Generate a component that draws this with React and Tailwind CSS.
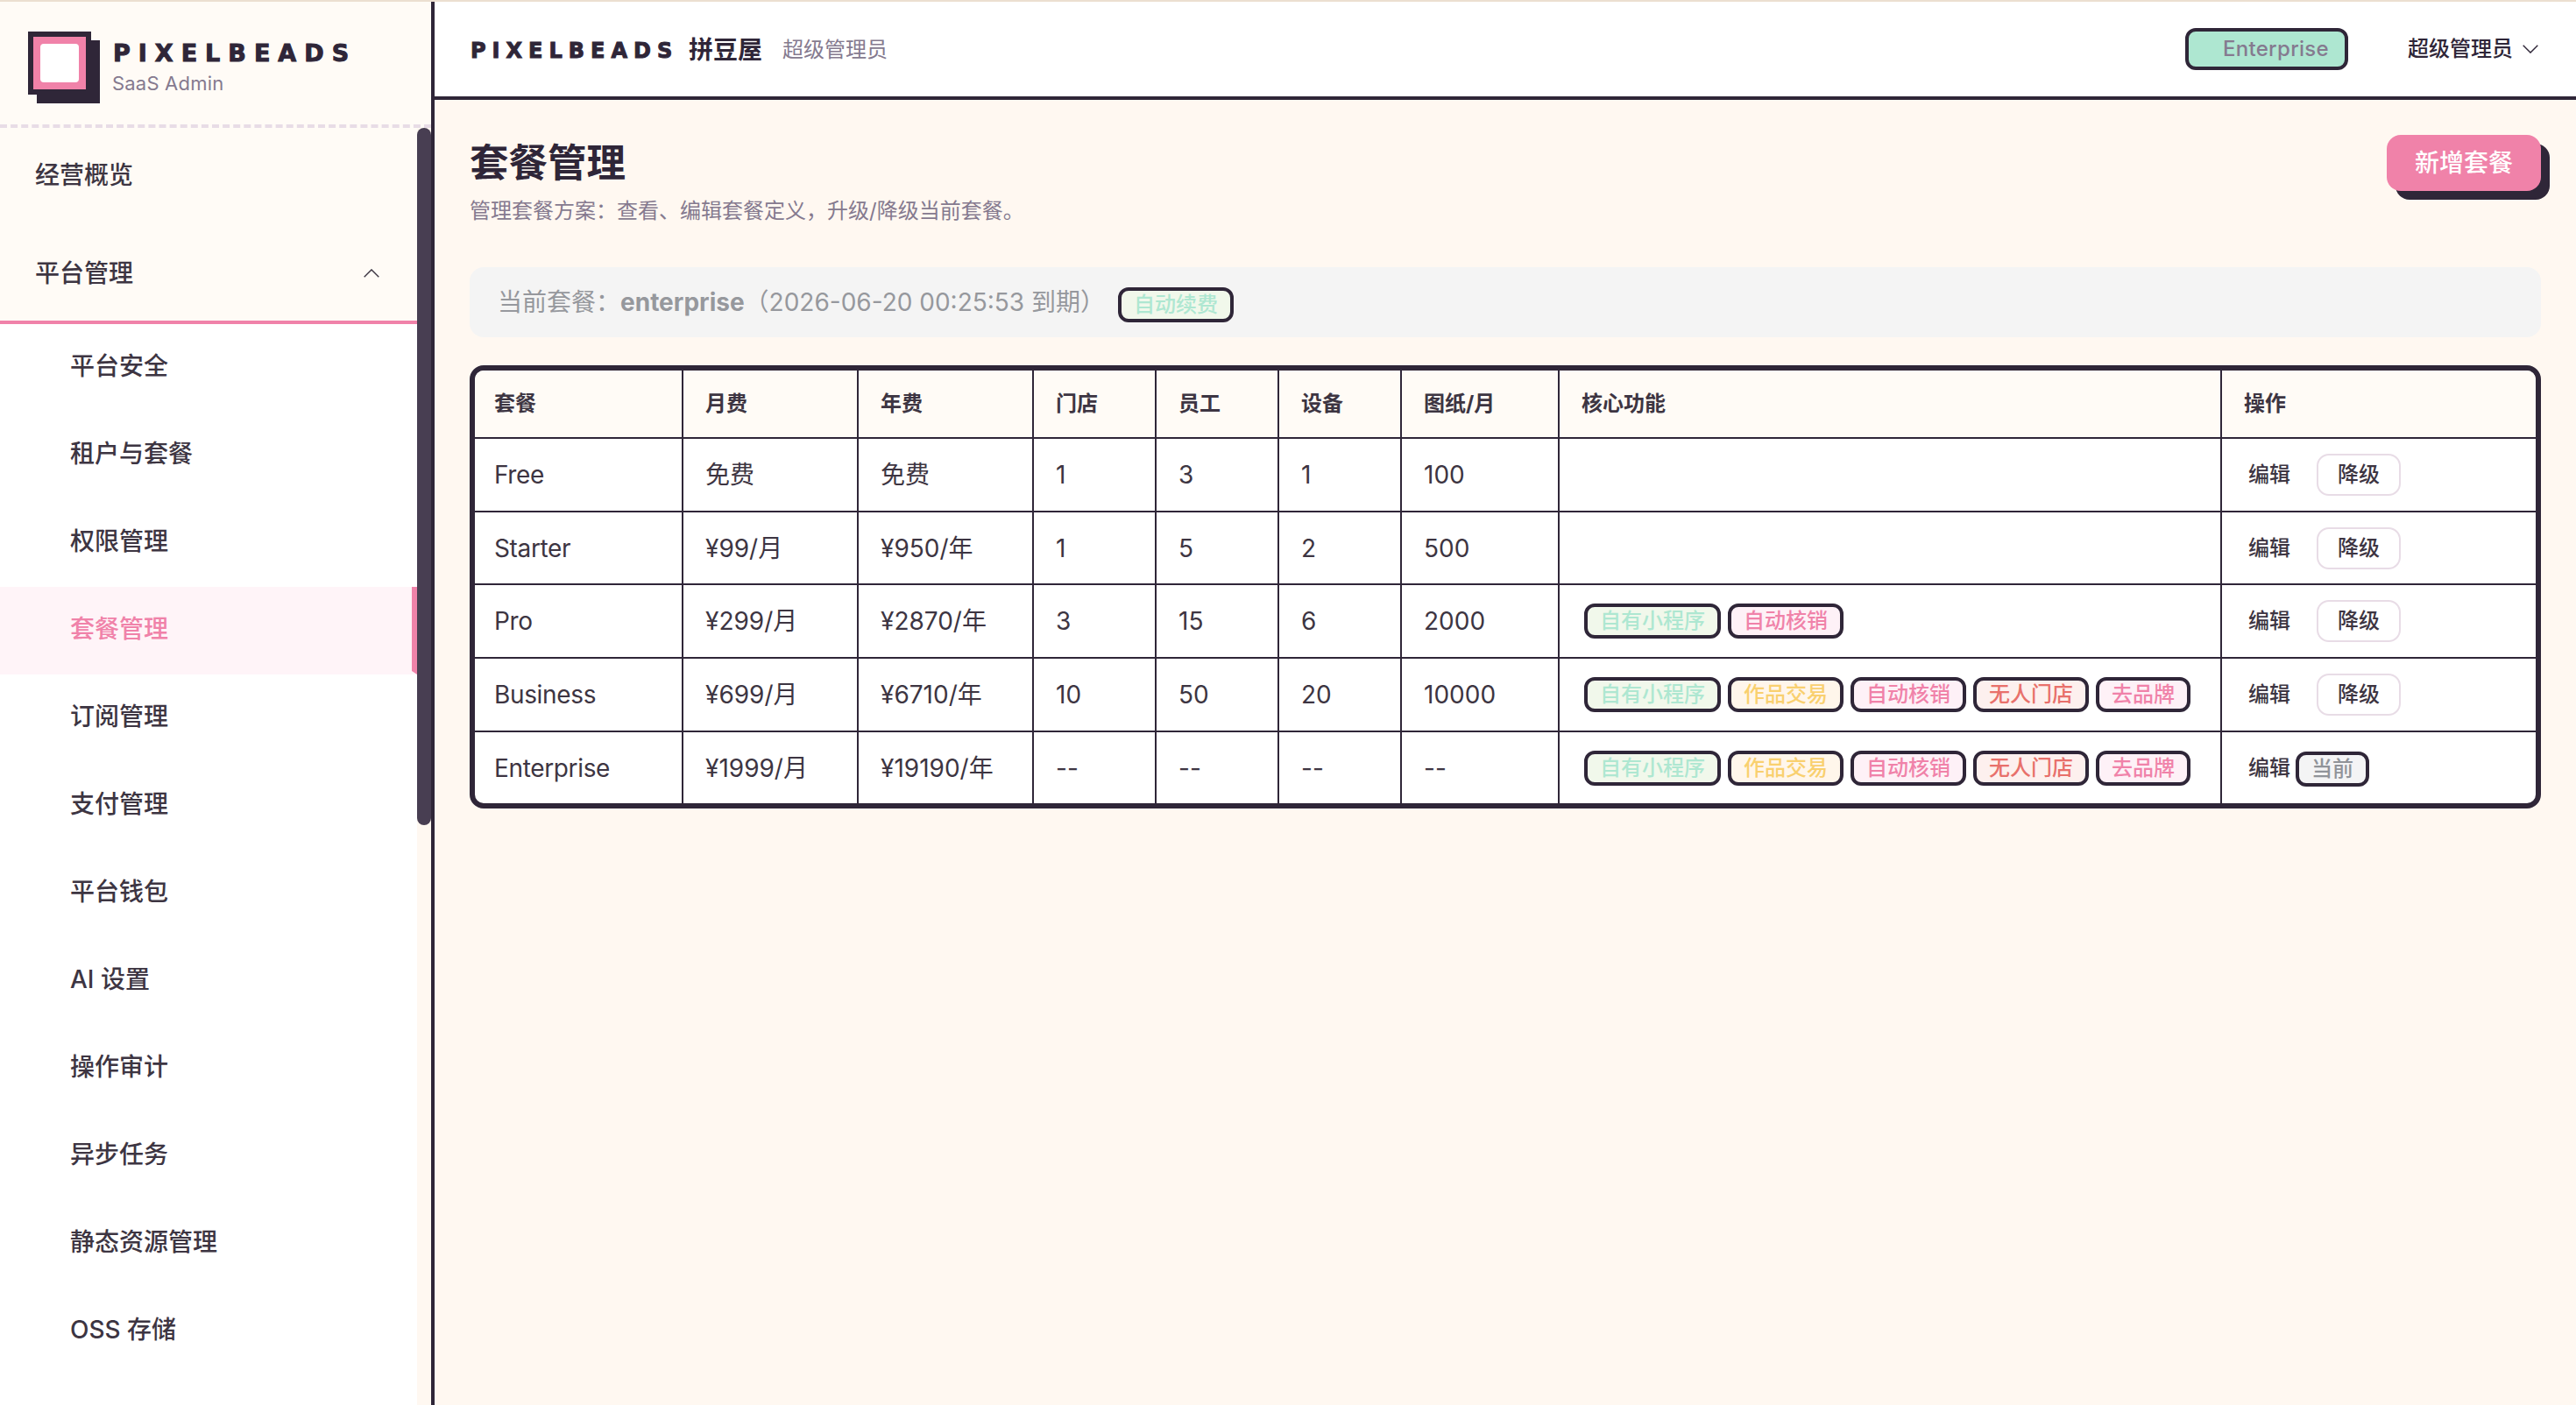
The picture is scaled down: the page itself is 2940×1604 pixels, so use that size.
import React, { useState } from 'react'

const menu = ['平台安全', '租户与套餐', '权限管理', '套餐管理', '订阅管理', '支付管理', '平台钱包', 'AI 设置', '操作审计', '异步任务', '静态资源管理', 'OSS 存储']

const headers = ['套餐', '月费', '年费', '门店', '员工', '设备', '图纸/月', '核心功能', '操作']

const allTags = ['自有小程序', '作品交易', '自动核销', '无人门店', '去品牌']

const plans = [
	{ name: 'Free', cells: ['免费', '免费', '1', '3', '1', '100'], tags: [] },
	{ name: 'Starter', cells: ['¥99/月', '¥950/年', '1', '5', '2', '500'], tags: [] },
	{ name: 'Pro', cells: ['¥299/月', '¥2870/年', '3', '15', '6', '2000'], tags: ['自有小程序', '自动核销'] },
	{ name: 'Business', cells: ['¥699/月', '¥6710/年', '10', '50', '20', '10000'], tags: allTags },
	{ name: 'Enterprise', cells: ['¥1999/月', '¥19190/年', '--', '--', '--', '--'], tags: allTags, current: true }
]

const tagColors = {
	'自有小程序': 'bg-[#f1f8eb] text-[#aee7d1]',
	'自动续费': 'bg-[#f1f8eb] text-[#aee7d1]',
	'作品交易': 'bg-[#fff6eb] text-[#f9d06f]',
	'自动核销': 'bg-[#fef1f7] text-[#f082a9]',
	'无人门店': 'bg-[#fdf0ee] text-[#e8706b]',
	'去品牌': 'bg-[#fef1f7] text-[#f082a9]',
	'当前': 'bg-[#f4f4f5] text-[#909399]'
}

function Tag({ label }) {
	return (
		<span className={`inline-flex h-10 shrink-0 items-center rounded-[12px] border-4 border-[#2f2638] px-[14px] text-[24px] leading-none font-medium whitespace-nowrap ${tagColors[label]}`}>{label}</span>
	)
}

function Chevron({ up }) {
	return (
		<svg width="18" height="10" viewBox="0 0 18 10" fill="none" stroke="currentColor" strokeWidth="1.4">
			<path d={up ? 'M.7 9.2 9 .9l8.3 8.3' : 'M.7.8 9 9.1 17.3.8'} />
		</svg>
	)
}

function Sidebar() {
	const [active, setActive] = useState('套餐管理')

	return (
		<aside className="flex h-full w-[496px] shrink-0 flex-col border-r-4 border-[#2f2638] bg-[#fffbf6]">
			<div className="flex h-36 shrink-0 items-start border-b-4 border-dashed border-[#e8dce6] pt-[34px] pl-8">
				<div className="flex size-[72px] items-center justify-center border-6 border-[#2f2638] bg-[#f082a9] shadow-[10px_10px_0_#2f2638]">
					<div className="size-11 rounded-[4px] bg-white"></div>
				</div>
				<div className="pt-[5px] pl-6">
					<p className="pl-px font-['DejaVu_Sans'] text-[27px] leading-[40px] font-bold tracking-[9px] text-[#2f2638] [-webkit-text-stroke:1px_#2f2638]">PIXELBEADS</p>
					<p className="-mt-px text-[22px] leading-[30px] tracking-[0.2px] text-[#857a8f]">SaaS Admin</p>
				</div>
			</div>
			<div className="flex min-h-0 flex-1">
				<nav className="w-[476px] overflow-hidden text-[28px] font-medium text-[#3d3542]">
					<div className="flex h-28 items-center border-b-4 border-transparent pl-10">经营概览</div>
					<div className="flex h-28 items-center justify-between border-b-4 border-[#f082a9] pr-[43px] pl-10">
						平台管理
						<Chevron up />
					</div>
					<ul className="bg-white">
						{menu.map((item) => (
							<li key={item} onClick={() => setActive(item)} className={`flex h-[100px] cursor-pointer items-center border-b-4 border-b-transparent pl-20 ${item === active ? 'border-r-6 border-r-[#f082a9] bg-[#fff4f8] text-[#f082a9]' : ''}`}>{item}</li>
						))}
						<li className="h-[100px]"></li>
					</ul>
				</nav>
				<div className="w-4 bg-[#fff8f1]">
					<div className="h-[796px] rounded-full bg-[#483e52]"></div>
				</div>
			</div>
		</aside>
	)
}

function Header() {
	return (
		<header className="flex h-28 shrink-0 items-center justify-between border-b-4 border-[#2f2638] bg-white pr-[43px] pl-10">
			<div className="flex items-center pt-px">
				<span className="w-[250px] pt-[2px] pl-px font-['DejaVu_Sans'] text-[24px] font-bold tracking-[7px] whitespace-nowrap text-[#2f2638] [-webkit-text-stroke:1px_#2f2638]">PIXELBEADS</span>
				<span className="text-[28px] font-bold text-[#2f2638]">拼豆屋</span>
				<span className="ml-[23px] text-[24px] text-[#857a8f]">超级管理员</span>
			</div>
			<div className="flex items-center text-[24px] font-medium">
				<span className="flex h-12 w-[186px] items-center justify-end rounded-[12px] border-4 border-[#2f2638] bg-[#aee7d1] pr-[18px] font-medium tracking-[0.3px] text-[#857a8f]">Enterprise</span>
				<span className="ml-[68px] text-[#2f2638]">超级管理员</span>
				<span className="ml-[11px] text-[#2f2638]"><Chevron /></span>
			</div>
		</header>
	)
}

export default function App() {
	return (
		<div className="flex h-[1604px] w-[2940px] flex-col overflow-hidden border-t-2 border-[#ecdfd0] font-[Inter,'Noto_Sans_CJK_SC',sans-serif]">
			<div className="flex min-h-0 flex-1">
				<Sidebar />
				<div className="flex flex-1 flex-col bg-[#fff8f1]">
					<Header />
					<main className="px-10 pt-10">
						<div className="flex items-start justify-between">
							<div className="pt-[2px]">
								<h1 className="text-[44.5px] leading-[60px] font-bold text-[#2f2638]">套餐管理</h1>
								<p className="mt-[5px] text-[24px] leading-[40px] text-[#857a8f]">管理套餐方案：查看、编辑套餐定义，升级/降级当前套餐。</p>
							</div>
							<button className="h-16 w-44 rounded-[16px] bg-[#f082a9] text-[28px] font-medium text-white shadow-[10px_10px_0_#2f2638]">新增套餐</button>
						</div>

						<div className="mt-11 flex h-20 items-center rounded-[16px] bg-[#f4f4f4] px-8 text-[28px] text-[#96989d]">
							<p className="whitespace-pre">当前套餐：<b>enterprise</b>（2026-06-20 00:25:53 到期）</p>
							<span className="ml-[15px] flex pt-[6px]"><Tag label="自动续费" /></span>
						</div>

						<div className="mt-8 overflow-hidden rounded-[16px] border-6 border-[#2f2638] bg-white">
							<table className="w-full table-fixed border-separate border-spacing-0 text-left text-[28px] text-[#3d3542]">
								<colgroup>
									<col className="w-[238px]" />
									<col className="w-[200px]" />
									<col className="w-[200px]" />
									<col className="w-[140px]" />
									<col className="w-[140px]" />
									<col className="w-[140px]" />
									<col className="w-[180px]" />
									<col className="w-[756px]" />
									<col className="w-[358px]" />
								</colgroup>
								<thead>
									<tr className="h-[78px] bg-[#fffbf6]">
										{headers.map((h) => (
											<th key={h} className="border-r-2 border-b-2 border-[#2f2638] pl-[25px] text-[24px] font-bold first:pl-[22px] last:border-r-0">{h}</th>
										))}
									</tr>
								</thead>
								<tbody>
									{plans.map((plan) => (
										<tr key={plan.name} className="group h-[84px] nth-2:h-[83px] last:h-[81px]">
											<td className="border-r-2 border-b-2 border-[#2f2638] pl-[22px] tracking-[-0.35px] group-last:border-b-0">{plan.name}</td>
											{plan.cells.map((cell, index) => (
												<td key={index} className="border-r-2 border-b-2 border-[#2f2638] pl-[25px] group-last:border-b-0">{cell}</td>
											))}
											<td className="border-r-2 border-b-2 border-[#2f2638] pl-7 group-last:border-b-0">
												<div className="flex gap-2">
													{plan.tags.map((tag) => <Tag key={tag} label={tag} />)}
												</div>
											</td>
											<td className="border-b-2 border-[#2f2638] pl-[30px] group-last:border-b-0">
												<div className="flex items-center text-[24px] font-medium">
													<button>编辑</button>
													{plan.current
														? <span className="ml-[6px] flex pt-[2px]"><Tag label="当前" /></span>
														: <button className="ml-[30px] h-12 w-24 rounded-[14px] border-2 border-[#e8dce6]">降级</button>}
												</div>
											</td>
										</tr>
									))}
								</tbody>
							</table>
						</div>
					</main>
				</div>
			</div>
		</div>
	)
}
